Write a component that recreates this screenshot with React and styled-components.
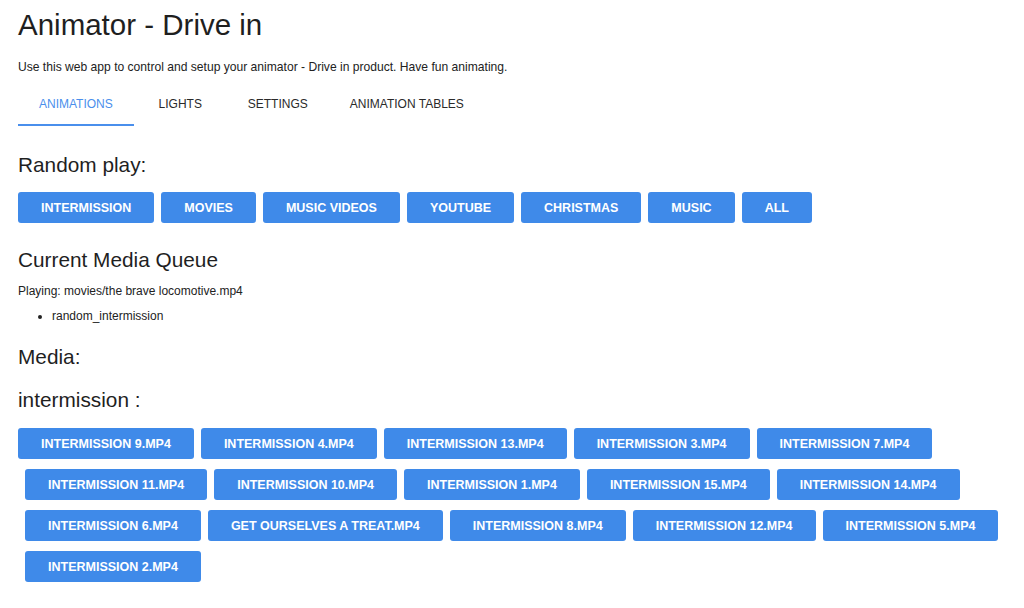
import styled, { createGlobalStyle } from "styled-components";

const Global = createGlobalStyle`
  html, body {
    margin: 0;
    padding: 0;
    background: #ffffff;
  }
  body {
    font-family: "Liberation Sans", Arial, Helvetica, sans-serif;
    color: #222222;
  }
`;

const Page = styled.div`
  padding: 5px 18px 0;
`;

const Title = styled.h1`
  margin: 0;
  font-size: 29.5px;
  line-height: 39px;
  font-weight: 400;
  color: #1f1f1f;
`;

const Lead = styled.p`
  margin: 15px 0 0;
  font-size: 12.1px;
  line-height: 16px;
`;

const Tabs = styled.div`
  margin-top: 3px;
  display: flex;
  height: 48px;
`;

const Tab = styled.div`
  min-width: 93px;
  padding: 5px 21px 0;
  box-sizing: border-box;
  display: flex;
  align-items: center;
  justify-content: center;
  font-size: 12px;
  text-transform: uppercase;
  color: ${(p) => (p.$active ? "#4a8fec" : "#2a2a2a")};
  border-bottom: 2px solid ${(p) => (p.$active ? "#4a8fec" : "transparent")};
`;

const Heading = styled.h2`
  margin: ${(p) => p.$top}px 0 0;
  font-size: 20.8px;
  line-height: 26px;
  font-weight: 400;
  color: #1f1f1f;
`;

const Text = styled.p`
  margin: 10px 0 0;
  font-size: 12px;
  line-height: 16px;
`;

const List = styled.ul`
  margin: 9px 0 0;
  padding-left: 34px;
  font-size: 12px;
  line-height: 16px;
`;

const ButtonRow = styled.div`
  margin-top: ${(p) => p.$top}px;
  display: flex;
  flex-wrap: wrap;
  column-gap: 7px;
  row-gap: 10px;
  padding-left: ${(p) => (p.$indent ? 7 : 0)}px;

  & > button:first-child {
    margin-left: ${(p) => (p.$indent ? -7 : 0)}px;
  }
`;

const Button = styled.button`
  height: 31px;
  padding: 0 23px;
  border: none;
  border-radius: 3px;
  background: #3f8ae9;
  color: #ffffff;
  font-family: "Liberation Sans", Arial, Helvetica, sans-serif;
  font-size: 12.5px;
  font-weight: 600;
  text-transform: uppercase;
  white-space: nowrap;
  cursor: pointer;
`;

const categories = [
  "Intermission",
  "Movies",
  "Music videos",
  "Youtube",
  "Christmas",
  "Music",
  "All",
];

const files = [
  "intermission 9.mp4",
  "intermission 4.mp4",
  "intermission 13.mp4",
  "intermission 3.mp4",
  "intermission 7.mp4",
  "intermission 11.mp4",
  "intermission 10.mp4",
  "intermission 1.mp4",
  "intermission 15.mp4",
  "intermission 14.mp4",
  "intermission 6.mp4",
  "get ourselves a treat.mp4",
  "intermission 8.mp4",
  "intermission 12.mp4",
  "intermission 5.mp4",
  "intermission 2.mp4",
];

const tabs = ["Animations", "Lights", "Settings", "Animation tables"];

export default function App() {
  return (
    <Page>
      <Global />
      <Title>Animator - Drive in</Title>
      <Lead>
        Use this web app to control and setup your animator - Drive in product.
        Have fun animating.
      </Lead>
      <Tabs>
        {tabs.map((t, i) => (
          <Tab key={t} $active={i === 0}>
            {t}
          </Tab>
        ))}
      </Tabs>

      <Heading $top={26}>Random play:</Heading>
      <ButtonRow $top={14}>
        {categories.map((c) => (
          <Button key={c}>{c}</Button>
        ))}
      </ButtonRow>

      <Heading $top={24}>Current Media Queue</Heading>
      <Text>Playing: movies/the brave locomotive.mp4</Text>
      <List>
        <li>random_intermission</li>
      </List>

      <Heading $top={20}>Media:</Heading>
      <Heading $top={17}>intermission :</Heading>
      <ButtonRow $top={15} $indent>
        {files.map((f) => (
          <Button key={f}>{f}</Button>
        ))}
      </ButtonRow>
    </Page>
  );
}
